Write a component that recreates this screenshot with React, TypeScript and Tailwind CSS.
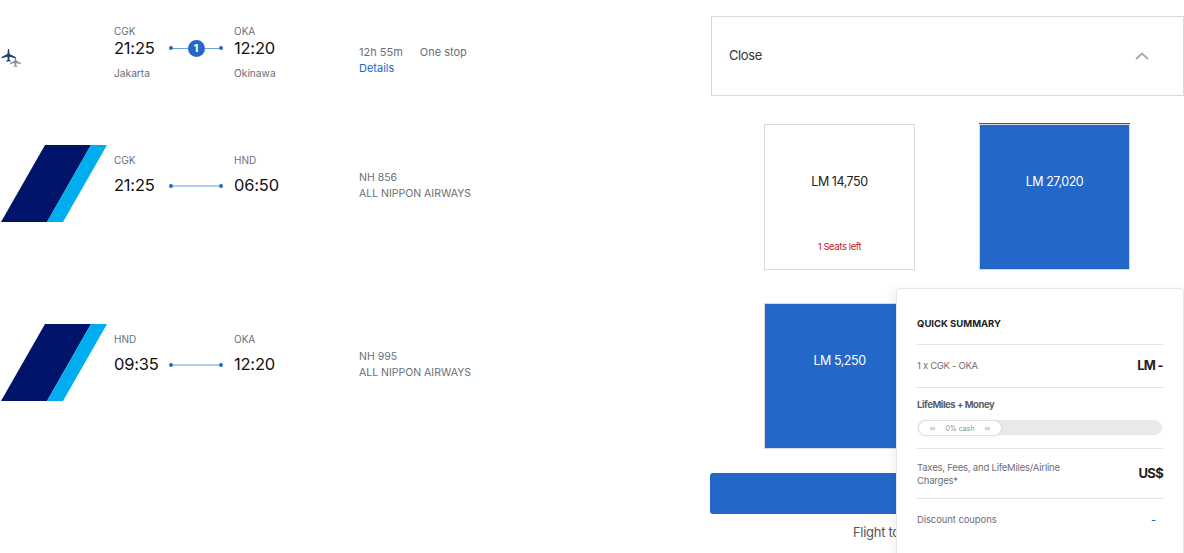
import React from "react";

const font = { fontFamily: "Inter, 'Liberation Sans', sans-serif" };

function Route({ from, to, dep, arr, fromCity, toCity, stop }: { from: string; to: string; dep: string; arr: string; fromCity?: string; toCity?: string; stop?: boolean }) {
  return (
    <div className={`flex w-[245px] shrink-0 ${stop ? "" : "pt-[9px]"}`}>
      <div className="w-[55px] shrink-0">
        <div className="h-[12px] text-[10px] leading-[12px] text-[#6b6f76]">{from}</div>
        <div className={`${stop ? "-mt-px" : "mt-[7px]"} h-[24px] text-[16.500px] leading-[24px] tracking-[-0.2px] text-[#111]`}>{dep}</div>
        {fromCity && <div className="mt-[6px] text-[10.200px] leading-[14px] text-[#6b6f76]">{fromCity}</div>}
      </div>
      <div className={`${stop ? "mt-[11px]" : "mt-[20px]"} flex h-[24px] w-[65px] shrink-0 items-center`}>
        <div className="flex w-[54px] items-center">
          <span className="h-[4px] w-[4px] shrink-0 rounded-full bg-[#2368c8]" />
          {stop ? (
            <>
              <span className="h-px flex-1 bg-[#6f9fe0]" />
              <span className="flex h-[17px] w-[17px] shrink-0 items-center justify-center rounded-full bg-[#2368c8] text-[10px] font-extrabold leading-none text-white">1</span>
              <span className="h-px flex-1 bg-[#6f9fe0]" />
            </>
          ) : (
            <span className="h-[2px] flex-1 bg-[#b3cbec]" />
          )}
          <span className="h-[4px] w-[4px] shrink-0 rounded-full bg-[#2368c8]" />
        </div>
      </div>
      <div>
        <div className="h-[12px] text-[10px] leading-[12px] text-[#6b6f76]">{to}</div>
        <div className={`${stop ? "-mt-px" : "mt-[7px]"} h-[24px] text-[16.500px] leading-[24px] tracking-[-0.2px] text-[#111]`}>{arr}</div>
        {toCity && <div className="mt-[6px] text-[10.200px] leading-[14px] text-[#6b6f76]">{toCity}</div>}
      </div>
    </div>
  );
}

function Tail() {
  return (
    <svg width="107" height="77" viewBox="0 0 107 77" className="block shrink-0">
      <polygon points="45,0 91,0 47,77 1,77" fill="#00156a" />
      <polygon points="91,0 107,0 63,77 47,77" fill="#00aeef" />
    </svg>
  );
}

function Planes() {
  return (
    <svg width="22" height="22" viewBox="0 0 22 22" className="block shrink-0">
      <path d="M15 9h1l.4 3.800 4.600 2.400v1l-4.600-1.200-.2 2.300 1.200.9v.7l-1.900-.5-1.900.5v-.7l1.200-.9-.2-2.300-4.600 1.200v-1l4.600-2.400z" fill="#7c8ea6" />
      <path d="M8 1h1l.6 5 5.900 3v1.300l-5.900-1.500-.3 3 1.600 1.200v.8l-2.400-.6-2.400.6v-.8l1.600-1.200-.3-3-5.900 1.500V9l5.900-3z" fill="#1f3f68" />
    </svg>
  );
}

function Fare({ label, selected, note }: { label: string; selected?: boolean; note?: string }) {
  return (
    <div className={`relative flex h-[146px] w-[151px] shrink-0 flex-col items-center border border-[#d9d9d9] ${selected ? "bg-[#2368c8] text-white" : "bg-white text-[#222]"}`}>
      <div className="mt-[48px] text-[12.500px] leading-[18px] tracking-[-0.45px]">{label}</div>
      {note && <div className="absolute bottom-[16px] text-[9.500px] leading-[12px] tracking-[-0.4px] text-[#c8171d]">{note}</div>}
    </div>
  );
}

function Hr() {
  return <div className="h-px bg-[#e2e2e2]" />;
}

export default function App() {
  return (
    <div className="relative flex h-[553px] w-[1184px] overflow-hidden bg-white" style={font}>
      <div className="w-[711px] shrink-0">
        <div className="flex h-[145px] pt-[25px]">
          <div className="flex w-[114px] shrink-0 pt-[23px]"><Planes /></div>
          <Route from="CGK" to="OKA" dep="21:25" arr="12:20" fromCity="Jakarta" toCity="Okinawa" stop />
          <div className="pt-[19px] text-[11px] leading-[16px] text-[#6b6f76]">
            <div className="flex gap-[17px]"><span>12h 55m</span><span>One stop</span></div>
            <div className="text-[#2368c8]">Details</div>
          </div>
        </div>
        <div className="flex h-[179px]">
          <div className="w-[114px] shrink-0"><Tail /></div>
          <Route from="CGK" to="HND" dep="21:25" arr="06:50" />
          <div className="pt-[25px] text-[10.500px] leading-[16px] text-[#6b6f76]">
            <div>NH 856</div>
            <div>ALL NIPPON AIRWAYS</div>
          </div>
        </div>
        <div className="flex">
          <div className="w-[114px] shrink-0"><Tail /></div>
          <Route from="HND" to="OKA" dep="09:35" arr="12:20" />
          <div className="pt-[25px] text-[10.500px] leading-[16px] text-[#6b6f76]">
            <div>NH 995</div>
            <div>ALL NIPPON AIRWAYS</div>
          </div>
        </div>
      </div>

      <div className="w-[473px] shrink-0 pt-[16px]">
        <div className="flex h-[80px] items-center justify-between border border-[#d9d9d9] pl-[17px] pr-[34px]">
          <span className="text-[13px] tracking-[-0.4px] text-[#333]">Close</span>
          <svg width="14" height="8" viewBox="0 0 14 8" fill="none" stroke="#aaaaaa" strokeWidth="2"><path d="M1 7l6-5.500L13 7" /></svg>
        </div>
        <div className="ml-[53px] mt-[28px] flex gap-[64px]">
          <Fare label="LM 14,750" note="1 Seats left" />
          <div className="-mt-px border-t border-t-[#555]"><Fare label="LM 27,020" selected /></div>
        </div>
        <div className="ml-[53px] mt-[33px]">
          <Fare label="LM 5,250" selected />
        </div>
        <div className="-ml-px mt-[24px] h-[41px] rounded-[3px] bg-[#2368c8]" />
        <div className="ml-[142px] mt-[9px] text-[13px] leading-[18px] tracking-[-0.3px] text-[#555]">Flight to Okinawa</div>
      </div>

      <div className="absolute left-[896px] top-[288px] h-[280px] w-[288px] rounded-[3px] border border-[#e6e6e6] bg-white px-[20px] shadow-[-4px_0_8px_rgba(0,0,0,0.05)]">
        <div className="flex h-[55px] items-center pt-[14px] text-[9.500px] font-bold leading-[14px] text-[#222]">QUICK SUMMARY</div>
        <Hr />
        <div className="flex h-[42px] items-center justify-between">
          <span className="text-[9.500px] tracking-[-0.3px] text-[#6b6f76]">1 x CGK - OKA</span>
          <span className="text-[13px] font-bold tracking-[-0.7px] text-[#222]">LM -</span>
        </div>
        <Hr />
        <div className="mt-[10px] text-[9.500px] font-bold leading-[14px] tracking-[-0.45px] text-[#5b5f66]">LifeMiles + Money</div>
        <div className="mx-px mt-[8px] h-[15px] rounded-full bg-[#e8e9ea]">
          <div className="flex h-[16px] w-[84px] items-center justify-center gap-[10px] rounded-full border border-[#e0e0e0] bg-white shadow-[0_0_2px_rgba(0,0,0,0.1)]">
            <span className="h-[3px] w-[5px] bg-[#d4d4d4]" />
            <span className="text-[7px] leading-none text-[#8a8d92]">0% cash</span>
            <span className="h-[3px] w-[5px] bg-[#d4d4d4]" />
          </div>
        </div>
        <div className="mt-[13px]"><Hr /></div>
        <div className="flex h-[49px] items-center justify-between">
          <span className="w-[160px] text-[9.500px] leading-[13px] tracking-[-0.2px] text-[#6b6f76]">Taxes, Fees, and LifeMiles/Airline Charges*</span>
          <span className="text-[13px] font-bold tracking-[-0.7px] text-[#222]">US$</span>
        </div>
        <Hr />
        <div className="flex h-[42px] items-center justify-between pr-[7px]">
          <span className="text-[9.500px] tracking-[-0.1px] text-[#6b6f76]">Discount coupons</span>
          <span className="text-[11px] font-medium text-[#2368c8]">-</span>
        </div>
      </div>
    </div>
  );
}
